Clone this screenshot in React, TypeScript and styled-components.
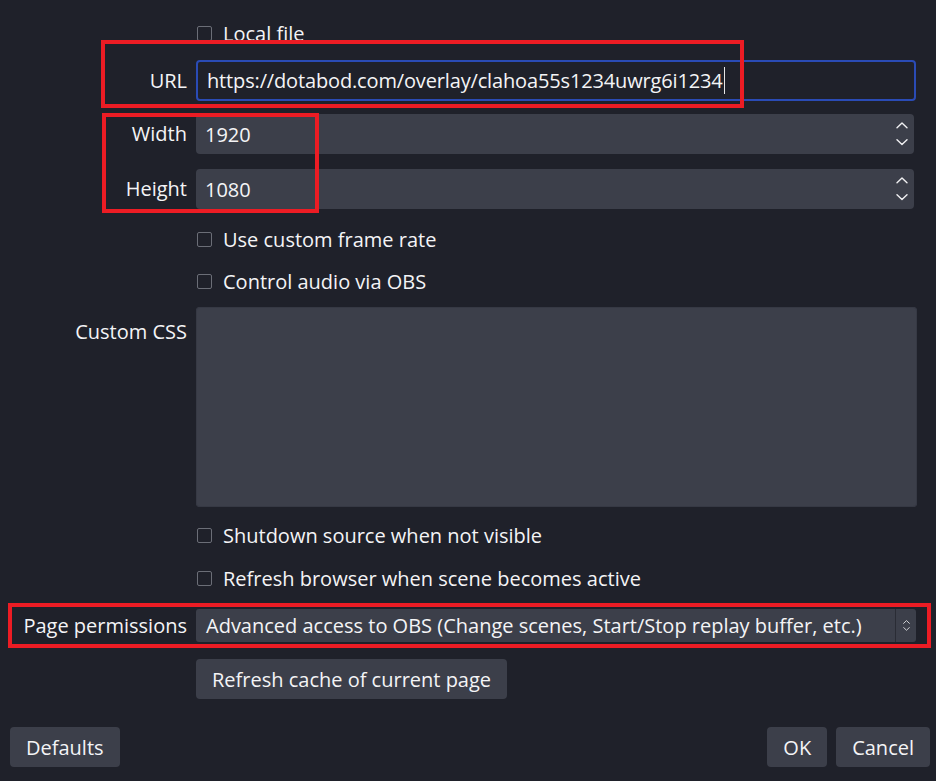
import styled, { createGlobalStyle } from 'styled-components'

const GlobalStyle = createGlobalStyle`
  html, body {
    margin: 0;
    padding: 0;
    background: #1f212a;
  }
  body {
    font-family: "Open Sans", "Noto Sans", sans-serif;
    color: #f4f4f6;
  }
`

const ui = {
  Page: styled.div`
    position: relative;
    width: 936px;
    height: 781px;
    overflow: hidden;
    background: #1f212a;
    font-size: 20px;
  `,
  Form: styled.div`
    display: flex;
    flex-direction: column;
    padding: 18px 20px 0 0;
  `,
  Row: styled.div<{ $gap: number; $align?: string }>`
    display: grid;
    grid-template-columns: 187px 1fr;
    column-gap: 9px;
    align-items: ${({ $align }) => $align || 'center'};
    margin-top: ${({ $gap }) => $gap}px;
  `,
  Label: styled.div<{ $padTop?: number }>`
    text-align: right;
    line-height: 26px;
    padding-top: ${({ $padTop }) => $padTop || 0}px;
    white-space: nowrap;
  `,
  UrlInput: styled.div`
    height: 41px;
    box-sizing: border-box;
    border: 2px solid #2a4bb5;
    border-radius: 4px;
    display: flex;
    align-items: center;
    padding-left: 9px;
    background: #1f212a;
    white-space: nowrap;
    letter-spacing: -0.15px;
  `,
  Caret: styled.span`
    display: inline-block;
    width: 1px;
    height: 27px;
    margin-left: 1px;
    background: #e6e6e6;
  `,
  Spin: styled.div`
    height: 40px;
    margin-right: 2px;
    border-radius: 4px;
    background: #3c3f4a;
    display: flex;
    align-items: center;
    justify-content: space-between;
    padding: 0 6px 0 9px;
  `,
  Arrows: styled.div<{ $gap: number }>`
    display: flex;
    flex-direction: column;
    gap: ${({ $gap }) => $gap}px;
  `,
  Check: styled.label`
    grid-column: 2;
    height: 30px;
    display: flex;
    align-items: center;
    gap: 11px;
    padding-left: 1px;
  `,
  Box: styled.span`
    width: 15px;
    height: 15px;
    box-sizing: border-box;
    border: 1.5px solid #6b6e77;
    border-radius: 2px;
  `,
  TextArea: styled.div`
    height: 200px;
    margin-right: -1px;
    border-radius: 4px;
    background: #3c3f4a;
    box-shadow: inset 0 0 0 1px #363944;
  `,
  Select: styled.div`
    height: 33px;
    display: flex;
    align-items: stretch;
    border-radius: 3px;
    background: #3c3f4a;
    overflow: hidden;
  `,
  SelectText: styled.div`
    flex: 1;
    display: flex;
    align-items: center;
    padding-left: 10px;
    white-space: nowrap;
  `,
  SelectArrow: styled.div`
    width: 20px;
    border-left: 1px solid #2a2c35;
    display: flex;
    align-items: center;
    justify-content: center;
  `,
  Button: styled.button`
    font-family: "Open Sans", "Noto Sans", sans-serif;
    font-size: 20px;
    color: #f4f4f6;
    height: 40px;
    padding: 0 16px;
    border: none;
    border-radius: 4px;
    background: #3c3f4a;
  `,
  CacheRow: styled.div`
    display: flex;
    margin-top: 17px;
    padding-left: 196px;
  `,
  Footer: styled.div`
    display: flex;
    align-items: center;
    gap: 9px;
    margin-top: 28px;
    padding: 0 6px 0 10px;
  `,
  Spacer: styled.div`
    flex: 1;
  `,
  Mark: styled.div<{ $x: number; $y: number; $w: number; $h: number }>`
    position: absolute;
    left: ${({ $x }) => $x}px;
    top: ${({ $y }) => $y}px;
    width: ${({ $w }) => $w}px;
    height: ${({ $h }) => $h}px;
    box-sizing: border-box;
    border: 4px solid #ec1c24;
    pointer-events: none;
  `
}

const Chevron = ({ up, size = 12 }: { up?: boolean; size?: number }) => (
  <svg width={size} height={size * 0.55} viewBox="0 0 12 6.6" fill="none">
    <path
      d={up ? 'M1 5.8 L6 1 L11 5.8' : 'M1 0.8 L6 5.6 L11 0.8'}
      stroke="#f0f0f2"
      strokeWidth="1.4"
      strokeLinecap="round"
      strokeLinejoin="round"
    />
  </svg>
)

const SpinBox = ({ value }: { value: string }) => (
  <ui.Spin>
    <span>{value}</span>
    <ui.Arrows $gap={10}>
      <Chevron up />
      <Chevron />
    </ui.Arrows>
  </ui.Spin>
)

const CheckRow = ({ gap, text }: { gap: number; text: string }) => (
  <ui.Row $gap={gap}>
    <ui.Check>
      <ui.Box />
      <span>{text}</span>
    </ui.Check>
  </ui.Row>
)

const App = () => {
  return (
    <>
      <GlobalStyle />
      <ui.Page>
        <ui.Form>
          <CheckRow gap={0} text="Local file" />
          <ui.Row $gap={12}>
            <ui.Label>URL</ui.Label>
            <ui.UrlInput>
              https://dotabod.com/overlay/clahoa55s1234uwrg6i1234
              <ui.Caret />
            </ui.UrlInput>
          </ui.Row>
          <ui.Row $gap={13}>
            <ui.Label>Width</ui.Label>
            <SpinBox value="1920" />
          </ui.Row>
          <ui.Row $gap={15}>
            <ui.Label>Height</ui.Label>
            <SpinBox value="1080" />
          </ui.Row>
          <CheckRow gap={15} text="Use custom frame rate" />
          <CheckRow gap={12} text="Control audio via OBS" />
          <ui.Row $gap={11} $align="start">
            <ui.Label $padTop={12}>Custom CSS</ui.Label>
            <ui.TextArea />
          </ui.Row>
          <CheckRow gap={13} text="Shutdown source when not visible" />
          <CheckRow gap={13} text="Refresh browser when scene becomes active" />
          <ui.Row $gap={16}>
            <ui.Label>Page permissions</ui.Label>
            <ui.Select>
              <ui.SelectText>
                Advanced access to OBS (Change scenes, Start/Stop replay buffer, etc.)
              </ui.SelectText>
              <ui.SelectArrow>
                <ui.Arrows $gap={3}>
                  <Chevron up size={7} />
                  <Chevron size={7} />
                </ui.Arrows>
              </ui.SelectArrow>
            </ui.Select>
          </ui.Row>
        </ui.Form>
        <ui.CacheRow>
          <ui.Button>Refresh cache of current page</ui.Button>
        </ui.CacheRow>
        <ui.Footer>
          <ui.Button>Defaults</ui.Button>
          <ui.Spacer />
          <ui.Button>OK</ui.Button>
          <ui.Button>Cancel</ui.Button>
        </ui.Footer>

        <ui.Mark $x={101} $y={40} $w={643} $h={68} />
        <ui.Mark $x={102} $y={113} $w={217} $h={100} />
        <ui.Mark $x={8} $y={603} $w={923} $h={45} />
      </ui.Page>
    </>
  )
}

export default App
